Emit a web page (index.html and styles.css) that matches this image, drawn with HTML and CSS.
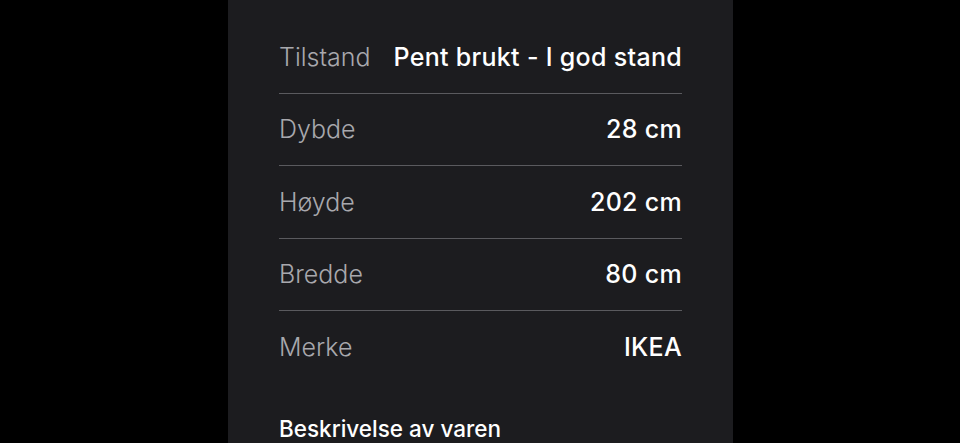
FILE: index.html
```html
<!DOCTYPE html>
<html lang="no">
<head>
    <meta charset="UTF-8">
    <title>Detaljer</title>
    <link rel="stylesheet" href="styles.css">
</head>
<body>
<div class="sheet">
    <div class="props">
        <div class="row">
            <span class="key">Tilstand</span>
            <span class="val">Pent brukt - I god stand</span>
        </div>
        <div class="row">
            <span class="key">Dybde</span>
            <span class="val">28 cm</span>
        </div>
        <div class="row">
            <span class="key">Høyde</span>
            <span class="val">202 cm</span>
        </div>
        <div class="row">
            <span class="key">Bredde</span>
            <span class="val">80 cm</span>
        </div>
        <div class="row last">
            <span class="key">Merke</span>
            <span class="val">IKEA</span>
        </div>
    </div>
    <h2 class="title">Beskrivelse av varen</h2>
</div>
</body>
</html>
```

FILE: styles.css
```css
* {
    margin: 0;
    padding: 0;
    box-sizing: border-box;
}

html, body {
    height: 100%;
    background: #000;
    overflow: hidden;
}

body {
    font-family: Inter, "Noto Sans", sans-serif;
    color: #fff;
}

.sheet {
    width: 505px;
    min-height: 100%;
    margin: 0 0 0 228px;
    padding: 21px 51px 0 51px;
    background: #1c1c1f;
}

.row {
    display: flex;
    justify-content: space-between;
    align-items: center;
    height: 72.5px;
    border-bottom: 1.5px solid #5a5a5e;
}

.row.last {
    border-bottom: none;
}

.key {
    font-size: 25px;
    font-weight: 300;
    color: #a8a8ad;
}

.val {
    font-size: 25px;
    font-weight: 500;
    letter-spacing: 0.3px;
    color: #fff;
}

.title {
    margin-top: 31px;
    font-size: 22.5px;
    font-weight: 500;
    color: #fff;
}
```
